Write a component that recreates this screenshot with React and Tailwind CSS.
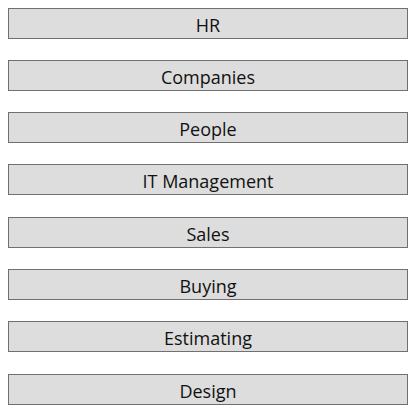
const items = ["HR", "Companies", "People", "IT Management", "Sales", "Buying", "Estimating", "Design"];

export default function App() {
  return (
    <div className="flex flex-col gap-[21.33px] pt-[7.5px] px-[8px] bg-white w-[420px] h-[416px]" style={{ fontFamily: '"Open Sans", "Noto Sans", sans-serif' }}>
      {items.map((item) => (
        <button
          key={item}
          className="w-[400px] h-[31px] shrink-0 flex items-center justify-center pt-[3px] border border-[#707070] bg-[#dddddd] text-[18px] text-[#111] leading-none"
        >
          {item}
        </button>
      ))}
    </div>
  );
}
